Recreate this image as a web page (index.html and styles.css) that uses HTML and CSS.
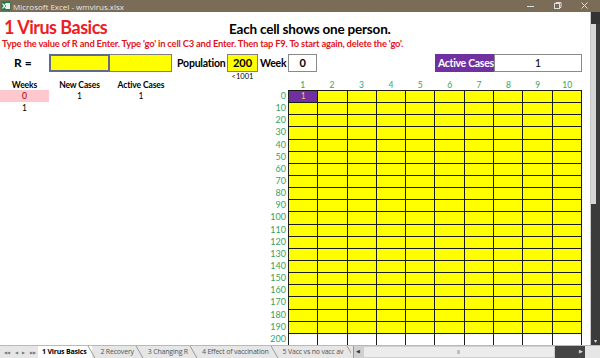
FILE: index.html
```html
<!DOCTYPE html>
<html>
<head>
    <title>Microsoft Excel - wmvirus.xlsx</title>
    <meta name="viewport" content="width=device-width, initial-scale=1">
    <link rel="stylesheet" href="styles.css">
</head>
<body>
    <div class="window">
        <div class="titlebar">
            <svg class="xl-icon" viewBox="0 0 10 10">
                <rect x="0.5" y="0.5" width="9" height="9" fill="#1f7a45"/>
                <rect x="5" y="2" width="4" height="6" fill="#e8f3ec"/>
                <path d="M1.5 2.5 L5 7.5 M5 2.5 L1.5 7.5" stroke="#fff" stroke-width="1.2"/>
            </svg>
            <span class="app-name">Microsoft Excel - wmvirus.xlsx</span>
            <div class="win-ctrls">
                <svg viewBox="0 0 27 12"><path d="M10 6.5 H17" stroke="#ddd" stroke-width="1"/></svg>
                <svg viewBox="0 0 27 12"><rect x="10.5" y="3.5" width="5" height="5" fill="none" stroke="#ddd"/><path d="M12 3.5 V2.5 H17 V7.5 H16" fill="none" stroke="#ddd"/></svg>
                <svg viewBox="0 0 27 12"><path d="M10.5 2.5 L16.5 8.5 M16.5 2.5 L10.5 8.5" stroke="#ddd" stroke-width="1"/></svg>
            </div>
        </div>

        <div class="main">
            <div class="sheet">
                <h1 class="title">1 Virus Basics</h1>
                <h2 class="subtitle">Each cell shows one person.</h2>
                <p class="instr">Type the value of R and Enter. Type 'go' in cell C3 and Enter. Then tap F9. To start again, delete the 'go'.</p>

                <div class="r-label">R =</div>
                <div class="input selected"></div>
                <div class="input second"></div>
                <div class="label pop">Population</div>
                <div class="input pop-val">200</div>
                <div class="label week">Week</div>
                <div class="box week-val">0</div>
                <div class="ac-label">Active Cases</div>
                <div class="box ac-val">1</div>

                <div class="note">&lt;1001</div>

                <div class="th th-weeks">Weeks</div>
                <div class="th th-new">New Cases</div>
                <div class="th th-active">Active Cases</div>

                <div class="td week0">0</div>
                <div class="td new0">1</div>
                <div class="td active0">1</div>
                <div class="td week1">1</div>

                <div class="col-heads" id="colHeads"></div>
                <div class="row-labels" id="rowLabels"></div>
                <div class="board" id="board"></div>
            </div>
            <div class="vscroll">
                <div class="vs-up"></div>
                <div class="vs-thumb"></div>
                <div class="vs-down">&#9662;</div>
            </div>
        </div>

        <div class="tabbar">
            <div class="tab-nav">
                <span>&#9664;&#9664;</span><span>&#9664;</span><span>&#9654;</span><span>&#9654;&#9654;</span>
            </div>
            <div class="tab active">1 Virus Basics</div>
            <div class="tab">2 Recovery</div>
            <div class="tab">3 Changing R</div>
            <div class="tab">4 Effect of vaccination</div>
            <div class="tab last">5 Vacc vs no vacc av</div>
            <div class="hscroll">
                <div class="hs-left">&#9664;</div>
                <div class="hs-track"><span class="grip"></span></div>
                <div class="hs-thumb">&#9654;</div>
            </div>
        </div>
    </div>
    <script src="script.js"></script>
</body>
</html>
```

FILE: styles.css
```css
body {
    margin: 0;
    font-family: Lato, 'Open Sans', sans-serif;
    background-color: #fff;
    color: #000;
}

.window {
    width: 600px;
    height: 358px;
    display: flex;
    flex-direction: column;
    overflow: hidden;
}

/* title bar */
.titlebar {
    height: 12px;
    background-color: #7a6c56;
    display: flex;
    align-items: center;
    color: #ece8e0;
    font-size: 8px;
    font-family: 'Open Sans', sans-serif;
}

.xl-icon {
    width: 10px;
    height: 10px;
    margin: 0 2px 0 1px;
}

.win-ctrls {
    margin-left: auto;
    display: flex;
    margin-right: 2px;
}

.win-ctrls svg {
    width: 27px;
    height: 12px;
}

/* sheet */
.main {
    display: flex;
    height: 334px;
}

.sheet {
    width: 591px;
    display: grid;
    grid-template-columns: 49px 61px 62px 55px 31px 30px repeat(10, 29.4px);
    grid-template-rows: 25px 13px 4px 18px 8px 10px repeat(21, 12.15px);
    overflow: hidden;
}

.title {
    grid-column: 1 / 6;
    grid-row: 1;
    margin: 0;
    padding-left: 4px;
    align-self: end;
    font-size: 18px;
    line-height: 20px;
    letter-spacing: -0.5px;
    color: #ee1c24;
    white-space: nowrap;
}

.subtitle {
    grid-column: 5 / 17;
    grid-row: 1;
    margin: 0;
    padding-left: 2px;
    align-self: end;
    font-size: 13.5px;
    line-height: 16px;
    letter-spacing: -0.2px;
}

.instr {
    grid-column: 1 / -1;
    grid-row: 2;
    margin: 0;
    padding-left: 2px;
    font-size: 9.4px;
    line-height: 13px;
    font-weight: bold;
    letter-spacing: -0.2px;
    color: #e3141b;
    white-space: nowrap;
}

.r-label {
    grid-column: 1;
    grid-row: 4;
    padding-left: 14px;
    font-weight: bold;
    font-size: 12px;
    line-height: 18px;
}

.input {
    background-color: #ffff00;
    border: 1px solid #7f7f7f;
    font-weight: bold;
    font-size: 11px;
    text-align: center;
    line-height: 16px;
}

.input.selected {
    grid-column: 2;
    grid-row: 4;
    border: 2px solid #5f6b8e;
}

.input.second {
    grid-column: 3;
    grid-row: 4;
    border-left: none;
}

.label {
    grid-row: 4;
    font-weight: bold;
    font-size: 10.5px;
    line-height: 18px;
    letter-spacing: -0.2px;
    white-space: nowrap;
}

.pop {
    grid-column: 4;
    padding-left: 5px;
}

.pop-val {
    grid-column: 5;
    grid-row: 4;
}

.week {
    grid-column: 6;
    padding-left: 2px;
}

.box {
    grid-row: 4;
    background-color: #fff;
    border: 1px solid #8a8a8a;
    font-weight: bold;
    font-size: 11px;
    line-height: 16px;
    text-align: center;
}

.week-val {
    grid-column: 7;
}

.ac-label {
    grid-column: 12 / 14;
    grid-row: 4;
    background-color: #7030a0;
    color: #fff;
    font-weight: bold;
    font-size: 10.5px;
    line-height: 18px;
    padding-left: 3px;
    letter-spacing: -0.3px;
    white-space: nowrap;
    overflow: hidden;
}

.ac-val {
    grid-column: 14 / 17;
    font-weight: normal;
}

.note {
    grid-column: 5;
    grid-row: 5 / 7;
    font-size: 7.5px;
    line-height: 10px;
    text-align: center;
}

/* left table */
.th {
    grid-row: 6;
    font-weight: bold;
    font-size: 8.5px;
    line-height: 10px;
    text-align: center;
    letter-spacing: -0.1px;
    white-space: nowrap;
}

.th-weeks { grid-column: 1; }
.th-new { grid-column: 2; }
.th-active { grid-column: 3; }

.td {
    font-size: 8.5px;
    line-height: 12px;
    text-align: center;
}

.week0 {
    grid-column: 1;
    grid-row: 7;
    background-color: #ffc7ce;
    color: #9c0006;
}

.new0 { grid-column: 2; grid-row: 7; }
.active0 { grid-column: 3; grid-row: 7; }
.week1 { grid-column: 1; grid-row: 8; }

/* grid of people */
.col-heads {
    grid-column: 7 / 17;
    grid-row: 6;
    display: grid;
    grid-template-columns: repeat(10, 1fr);
    color: #33a35e;
    font-size: 8.5px;
    line-height: 10px;
    text-align: center;
}

.row-labels {
    grid-column: 6;
    grid-row: 7 / 28;
    display: grid;
    grid-template-rows: repeat(21, 1fr);
    color: #33a35e;
    font-size: 9px;
    line-height: 12px;
    text-align: right;
    padding-right: 2px;
}

.board {
    grid-column: 7 / 17;
    grid-row: 7 / 28;
    display: grid;
    grid-template-columns: repeat(10, 1fr);
    grid-template-rows: repeat(21, 1fr);
    gap: 1px;
    padding: 1px 1px 0 1px;
    background-color: #1a1a1a;
}

.person {
    background-color: #ffff00;
}

.person.empty {
    background-color: #fff;
}

.person.sick {
    background-color: #7030a0;
    color: #efc36e;
    font-size: 8.5px;
    line-height: 11px;
    text-align: center;
}

/* vertical scroll bar */
.vscroll {
    width: 9px;
    background-color: #3b3b3b;
    display: flex;
    flex-direction: column;
    border-left: 1px solid #c8c8c8;
}

.vs-up {
    height: 12px;
    background-color: #333;
}

.vs-thumb {
    height: 180px;
    width: 5px;
    background-color: #d6d6d6;
}

.vs-down {
    margin-top: auto;
    color: #ddd;
    font-size: 6px;
    line-height: 8px;
    text-align: center;
}

/* sheet tabs */
.tabbar {
    height: 12px;
    background-color: #e6e6e6;
    border-top: 1px solid #b9b9b9;
    display: flex;
    align-items: stretch;
    font-family: 'Open Sans', sans-serif;
    font-size: 7px;
    color: #555;
}

.tab-nav {
    width: 36px;
    display: flex;
    align-items: center;
    justify-content: space-around;
    font-size: 4px;
    color: #777;
    padding-left: 2px;
}

.tab {
    position: relative;
    padding: 0 6px 0 8px;
    line-height: 11px;
    white-space: nowrap;
    letter-spacing: -0.2px;
}

.tab::after {
    content: "";
    position: absolute;
    right: 0;
    top: 0;
    bottom: 0;
    border-right: 1px solid #999;
    transform: skewX(30deg);
}

.tab.active {
    background-color: #fff;
    color: #000;
    font-weight: bold;
    padding-left: 4px;
}

.tab.last {
    width: 62px;
    overflow: hidden;
}

.hscroll {
    margin-left: 2px;
    width: 231px;
    display: flex;
    align-items: stretch;
    border-left: 1px solid #999;
}

.hs-left {
    width: 9px;
    font-size: 5px;
    line-height: 11px;
    text-align: center;
    color: #333;
    background-color: #d0d0d0;
}

.hs-track {
    flex-grow: 1;
    background-color: #ececec;
    border: 1px solid #cfcfcf;
    display: flex;
    align-items: center;
    justify-content: center;
}

.grip {
    width: 3px;
    height: 4px;
    background-color: #c0c0c0;
}

.hs-thumb {
    width: 28px;
    background-color: #454545;
    color: #ddd;
    font-size: 5px;
    line-height: 11px;
    text-align: right;
    padding-right: 2px;
}
```

FILE: script.js
```javascript
var board = document.getElementById("board");
var rowLabels = document.getElementById("rowLabels");
var colHeads = document.getElementById("colHeads");

for (var c = 1; c <= 10; c++) {
    var head = document.createElement("span");
    head.innerHTML = c;
    colHeads.appendChild(head);
}

for (var r = 0; r <= 20; r++) {
    var label = document.createElement("span");
    label.innerHTML = r * 10;
    rowLabels.appendChild(label);

    for (var c = 1; c <= 10; c++) {
        var cell = document.createElement("div");
        cell.classList.add("person");
        if (r == 20)
            cell.classList.add("empty");
        if (r == 0 && c == 1) {
            cell.classList.add("sick");
            cell.innerHTML = "1";
        }
        board.appendChild(cell);
    }
}
```
